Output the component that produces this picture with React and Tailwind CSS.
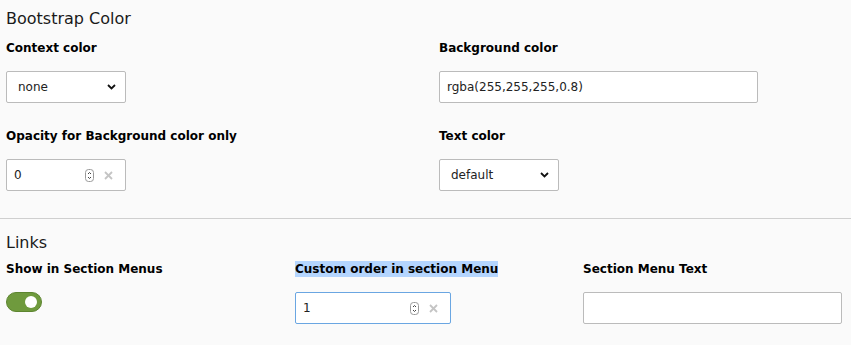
import React from "react";

const Label = ({ children, highlight }) => (
  <div className="text-[12px] leading-[18px] font-bold text-black whitespace-nowrap">
    {highlight ? <span className="bg-[#b4d5fe] py-[1px]">{children}</span> : children}
  </div>
);

const Chevron = () => (
  <svg width="9" height="6" viewBox="0 0 9 6" className="shrink-0">
    <polyline points="1,1 4.5,4.5 8,1" fill="none" stroke="#111" strokeWidth="1.8" />
  </svg>
);

const Spinner = () => (
  <svg width="9" height="13" viewBox="0 0 9 13" className="shrink-0">
    <rect x="0.5" y="0.5" width="8" height="12" rx="3" fill="#fff" stroke="#9a9a9a" />
    <polyline points="3,5 4.5,3.5 6,5" fill="none" stroke="#444" strokeWidth="1" />
    <polyline points="3,8 4.5,9.5 6,8" fill="none" stroke="#444" strokeWidth="1" />
  </svg>
);

const Clear = () => (
  <svg width="9" height="9" viewBox="0 0 9 9" className="shrink-0">
    <line x1="1" y1="1" x2="8" y2="8" stroke="#c4c4c4" strokeWidth="1.8" />
    <line x1="8" y1="1" x2="1" y2="8" stroke="#c4c4c4" strokeWidth="1.8" />
  </svg>
);

const Select = ({ value }) => (
  <div className="mt-[14px] w-[120px] h-[32px] bg-white border border-[#bbb] rounded-[2px] flex items-center justify-between pl-[11px] pr-[9px] text-[12px] text-[#222]">
    <span>{value}</span>
    <Chevron />
  </div>
);

const NumberInput = ({ value, width, focused }) => (
  <div
    className={`mt-[14px] h-[32px] bg-white border rounded-[2px] flex items-center pl-[7px] pr-[12px] text-[12px] text-[#222] ${
      focused ? "border-[#6aa6e2]" : "border-[#bbb]"
    }`}
    style={{ width }}
  >
    <span className="flex-1">{value}</span>
    <Spinner />
    <span className="w-[10px]" />
    <Clear />
  </div>
);

const TextInput = ({ value, width }) => (
  <div
    className="mt-[14px] h-[32px] bg-white border border-[#bbb] rounded-[2px] flex items-center px-[7px] text-[12px] text-[#222]"
    style={{ width }}
  >
    {value}
  </div>
);

const Toggle = () => (
  <div className="mt-[14px] w-[36px] h-[20px] rounded-full bg-[#6f9a3d] border border-[#5d8530] flex items-center justify-end pr-[4px]">
    <div className="w-[12px] h-[12px] rounded-full bg-white" />
  </div>
);

export default function App() {
  return (
    <div className="min-h-screen w-[851px] overflow-hidden bg-[#fafafa] text-black font-['Verdana','DejaVu_Sans',sans-serif]">
      {/* Bootstrap Color */}
      <div className="pl-[6px] pt-[7px]">
        <h2 className="text-[16px] leading-[24px] text-[#1a1a1a]">Bootstrap Color</h2>
        <div className="mt-[8px] grid grid-cols-[433px_433px] gap-y-[24px]">
          <div>
            <Label>Context color</Label>
            <Select value="none" />
          </div>
          <div>
            <Label>Background color</Label>
            <TextInput value="rgba(255,255,255,0.8)" width={319} />
          </div>
          <div>
            <Label>Opacity for Background color only</Label>
            <NumberInput value="0" width={120} />
          </div>
          <div>
            <Label>Text color</Label>
            <Select value="default" />
          </div>
        </div>
      </div>

      <div className="mt-[27px] border-t border-[#cfcfcf]" />

      {/* Links */}
      <div className="pl-[6px] pt-[12px]">
        <h2 className="text-[16px] leading-[24px] text-[#1a1a1a]">Links</h2>
        <div className="mt-[5px] grid grid-cols-[289px_288px_288px]">
          <div>
            <Label>Show in Section Menus</Label>
            <Toggle />
          </div>
          <div>
            <Label highlight>Custom order in section Menu</Label>
            <NumberInput value="1" width={156} focused />
          </div>
          <div>
            <Label>Section Menu Text</Label>
            <TextInput value="" width={259} />
          </div>
        </div>
      </div>
    </div>
  );
}
